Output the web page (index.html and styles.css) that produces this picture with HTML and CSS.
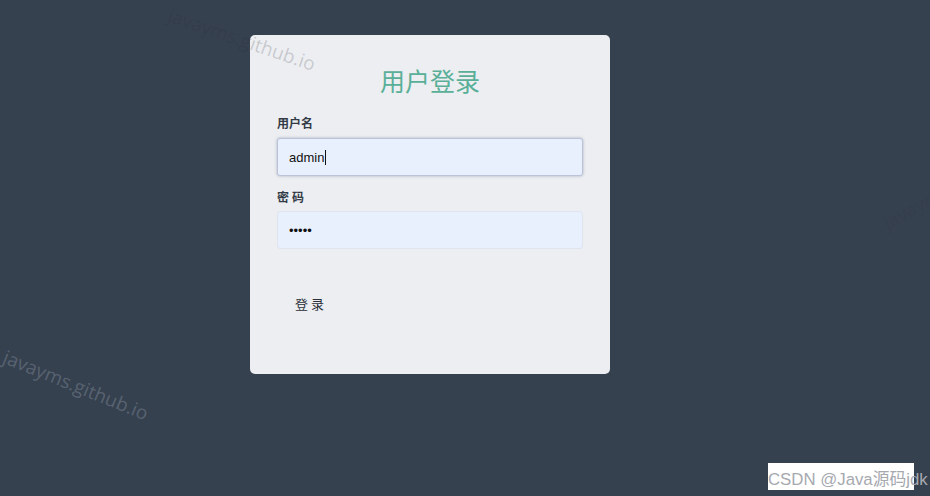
FILE: index.html
```html
<!DOCTYPE html>
<html lang="zh-CN">
<head>
    <meta charset="UTF-8">
    <title>用户登录</title>
    <link rel="stylesheet" href="styles.css">
</head>
<body>
<div class="page">
    <form class="login-box">
        <h1 class="login-title">用户登录</h1>
        <label class="field-label" for="username">用户名</label>
        <div class="field-input field-active" id="username">admin<span class="caret"></span></div>
        <label class="field-label label-spaced" for="password">密码</label>
        <input class="field-input" id="password" type="password" value="12345">
        <button class="login-btn" type="button">登录</button>
    </form>
</div>
<!-- 水印 -->
<div class="mark mark-top">javayms.github.io</div>
<div class="mark mark-left">javayms.github.io</div>
<div class="mark mark-right">javayms</div>
<div class="csdn"><span>CSDN @Java源码jdk</span></div>
</body>
</html>
```

FILE: styles.css
```css
*{
    margin: 0;
    padding: 0;
    box-sizing: border-box;
}
html, body{
    height: 100%;
}
body{
    background: #36414f;
    font-family: "Noto Sans CJK SC", "Liberation Sans", sans-serif;
    overflow: hidden;
}
.page{
    padding: 35px 0 0 250px;
}
.login-box{
    display: flex;
    flex-direction: column;
    align-items: flex-start;
    width: 360px;
    height: 339px;
    padding: 30px 27px 0;
    background: #eceef1;
    border-radius: 5px;
}
.login-title{
    align-self: stretch;
    text-align: center;
    font-size: 25px;
    line-height: 30px;
    font-weight: normal;
    color: #5aaf98;
}
.field-label{
    margin-top: 20px;
    font-size: 12px;
    line-height: 16px;
    font-weight: bold;
    color: #333b47;
}
.label-spaced{
    margin-top: 13px;
    letter-spacing: 3px;
}
.field-input{
    display: flex;
    align-items: center;
    width: 306px;
    height: 38px;
    margin-top: 7px;
    padding: 0 11px;
    font-family: "Liberation Sans", sans-serif;
    font-size: 13px;
    color: #111;
    background: #e8effd;
    border: 1px solid #dfe4ee;
    border-radius: 3px;
    outline: none;
}
.field-active{
    border-color: #bcc3d8;
    box-shadow: 0 0 3px rgba(90, 100, 140, .45);
}
.caret{
    display: inline-block;
    width: 1px;
    height: 15px;
    margin-left: 1px;
    background: #111;
}
#password{
    margin-top: 6px;
}
.login-btn{
    margin-top: 36px;
    height: 37px;
    padding: 0 15px 0 18px;
    font-family: "Noto Sans CJK SC", sans-serif;
    font-size: 13px;
    letter-spacing: 3px;
    color: #2a2f38;
    background: #eceef1;
    border: none;
    border-radius: 3px;
}
.mark{
    position: absolute;
    font-family: "Open Sans", "Liberation Sans", sans-serif;
    font-size: 19px;
    white-space: nowrap;
    transform-origin: 0 0;
    pointer-events: none;
}
.mark-top{
    left: 173px;
    top: 2px;
    transform: rotate(19deg);
    color: rgba(40, 45, 55, .2);
}
.mark-left{
    left: 9px;
    top: 344px;
    transform: rotate(22deg);
    color: rgba(170, 180, 195, .3);
}
.mark-right{
    left: 878px;
    top: 212px;
    transform: rotate(-28deg);
    color: rgba(40, 45, 55, .15);
}
.csdn{
    position: absolute;
    left: 768px;
    top: 463px;
    width: 146px;
    height: 27px;
    background: #fff;
    white-space: nowrap;
}
.csdn span{
    display: block;
    padding-top: 3px;
    font-family: "Liberation Sans", "Noto Sans CJK SC", sans-serif;
    font-size: 16.8px;
    color: #a6a9af;
}
```
